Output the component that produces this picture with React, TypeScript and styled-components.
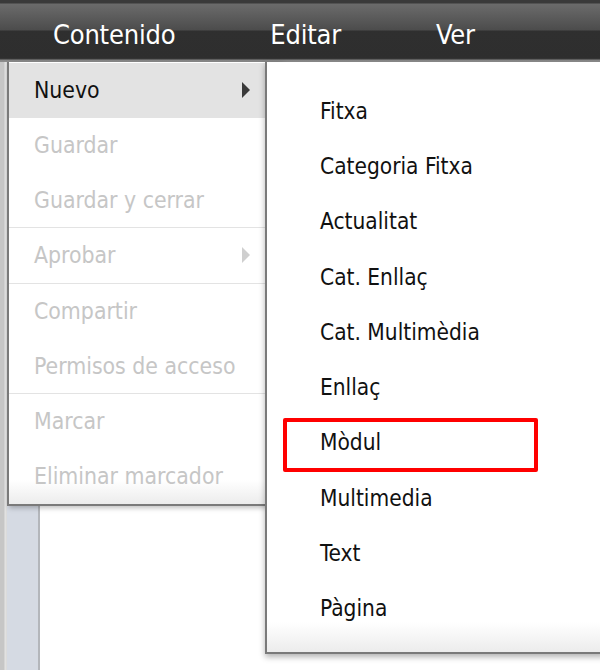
import React from "react";
import styled, { createGlobalStyle } from "styled-components";

const GlobalStyle = createGlobalStyle`
  html, body {
    margin: 0;
    padding: 0;
    background: #ffffff;
    overflow: hidden;
  }
  body {
    font-family: "DejaVu Sans Condensed", "DejaVu Sans", "Liberation Sans", sans-serif;
  }
`;

interface MenuEntry {
  label: string;
  disabled?: boolean;
  submenu?: boolean;
  active?: boolean;
  separatorAfter?: boolean;
}

const mainItems: MenuEntry[] = [
  { label: "Nuevo", submenu: true, active: true },
  { label: "Guardar", disabled: true },
  { label: "Guardar y cerrar", disabled: true, separatorAfter: true },
  { label: "Aprobar", disabled: true, submenu: true, separatorAfter: true },
  { label: "Compartir", disabled: true },
  { label: "Permisos de acceso", disabled: true, separatorAfter: true },
  { label: "Marcar", disabled: true },
  { label: "Eliminar marcador", disabled: true },
];

const newItems = [
  "Fitxa",
  "Categoria Fitxa",
  "Actualitat",
  "Cat. Enllaç",
  "Cat. Multimèdia",
  "Enllaç",
  "Mòdul",
  "Multimedia",
  "Text",
  "Pàgina",
];

const Arrow: React.FC<{ disabled?: boolean }> = ({ disabled }) => (
  <svg width="10" height="16" viewBox="0 0 10 16">
    <polygon points="1,0 9,8 1,16" fill={disabled ? "#cfcfcf" : "#3a3a3a"} />
  </svg>
);

const App: React.FC = () => {
  return (
    <>
      <GlobalStyle />
      <Page>
        <TopBar>
          <TopItem>Contenido</TopItem>
          <TopItem>Editar</TopItem>
          <TopItem>Ver</TopItem>
        </TopBar>
        <Workspace>
          <Gutter />
          <Sidebar />
          <Content />
        </Workspace>

        <Dropdown>
          {mainItems.map((item) => (
            <React.Fragment key={item.label}>
              <MenuRow $active={item.active} $disabled={item.disabled}>
                <span>{item.label}</span>
                {item.submenu && <Arrow disabled={item.disabled} />}
              </MenuRow>
              {item.separatorAfter && <Separator />}
            </React.Fragment>
          ))}
        </Dropdown>

        <Submenu>
          {newItems.map((label) => (
            <SubRow key={label} $marked={label === "Mòdul"}>
              {label}
            </SubRow>
          ))}
        </Submenu>
      </Page>
    </>
  );
};
export default App;

const Page = styled.div`
  position: relative;
  width: 600px;
  height: 670px;
  display: flex;
  flex-direction: column;
  overflow: hidden;
`;

const TopBar = styled.div`
  height: 62px;
  flex: none;
  display: flex;
  align-items: center;
  gap: 95px;
  padding: 6px 0 0 53px;
  box-sizing: border-box;
  background: linear-gradient(
    to bottom,
    #3a3a3a 0px,
    #3a3a3a 3px,
    #6b6b6b 4px,
    #4c4c4c 30px,
    #2f2f2f 31px,
    #2e2e2e 58px,
    #3c3c3c 59px,
    #858585 60px,
    #8e8e8e 62px
  );
`;

const TopItem = styled.div`
  color: #ffffff;
  font-size: 27px;
  letter-spacing: -0.2px;
  line-height: 1;
`;

const Workspace = styled.div`
  flex: 1;
  display: flex;
`;

const Gutter = styled.div`
  width: 7px;
  background: linear-gradient(to right, #c6c6c6 0, #c6c6c6 4px, #e4e4e4 5px, #d8d8d8 7px);
`;

const Sidebar = styled.div`
  width: 31px;
  background: #d5dae3;
  border-right: 2px solid #b3b6bb;
`;

const Content = styled.div`
  flex: 1;
  background: #ffffff;
`;

const Dropdown = styled.div`
  position: absolute;
  top: 62px;
  left: 7px;
  width: 272px;
  padding-top: 1px;
  display: flex;
  flex-direction: column;
  background: linear-gradient(to bottom, #ffffff calc(100% - 24px), #ececec 100%);
  border-left: 2px solid #7a7a7a;
  border-bottom: 2px solid #7a7a7a;
  box-shadow: 2px 2px 5px rgba(0, 0, 0, 0.25);
  z-index: 1;
`;

const MenuRow = styled.div<{ $active?: boolean; $disabled?: boolean }>`
  height: 54.7px;
  flex: none;
  box-sizing: border-box;
  padding: 0 30px 0 25px;
  display: flex;
  align-items: center;
  justify-content: space-between;
  font-size: 22.8px;
  color: ${(p) => (p.$disabled ? "#c6c6c6" : "#111111")};
  background: ${(p) => (p.$active ? "#e3e3e3" : "transparent")};
`;

const Separator = styled.div`
  height: 1px;
  flex: none;
  background: #e3e3e3;
`;

const Submenu = styled.div`
  position: absolute;
  top: 62px;
  left: 265px;
  width: 340px;
  height: 592px;
  box-sizing: border-box;
  padding-top: 21px;
  display: flex;
  flex-direction: column;
  background: linear-gradient(to bottom, #ffffff calc(100% - 30px), #ececec 100%);
  border-left: 2px solid #7a7a7a;
  border-bottom: 2px solid #7a7a7a;
  box-shadow: 0 3px 6px rgba(0, 0, 0, 0.3);
  z-index: 2;
`;

const SubRow = styled.div<{ $marked?: boolean }>`
  position: relative;
  height: 55.3px;
  flex: none;
  display: flex;
  align-items: center;
  padding-left: 53px;
  font-size: 22.5px;
  color: #111111;

  ${(p) =>
    p.$marked &&
    `
    &::after {
      content: "";
      position: absolute;
      left: 16px;
      top: 3px;
      width: 255px;
      height: 54px;
      box-sizing: border-box;
      border: 4px solid #ff0000;
      border-radius: 2px;
    }
  `}
`;
